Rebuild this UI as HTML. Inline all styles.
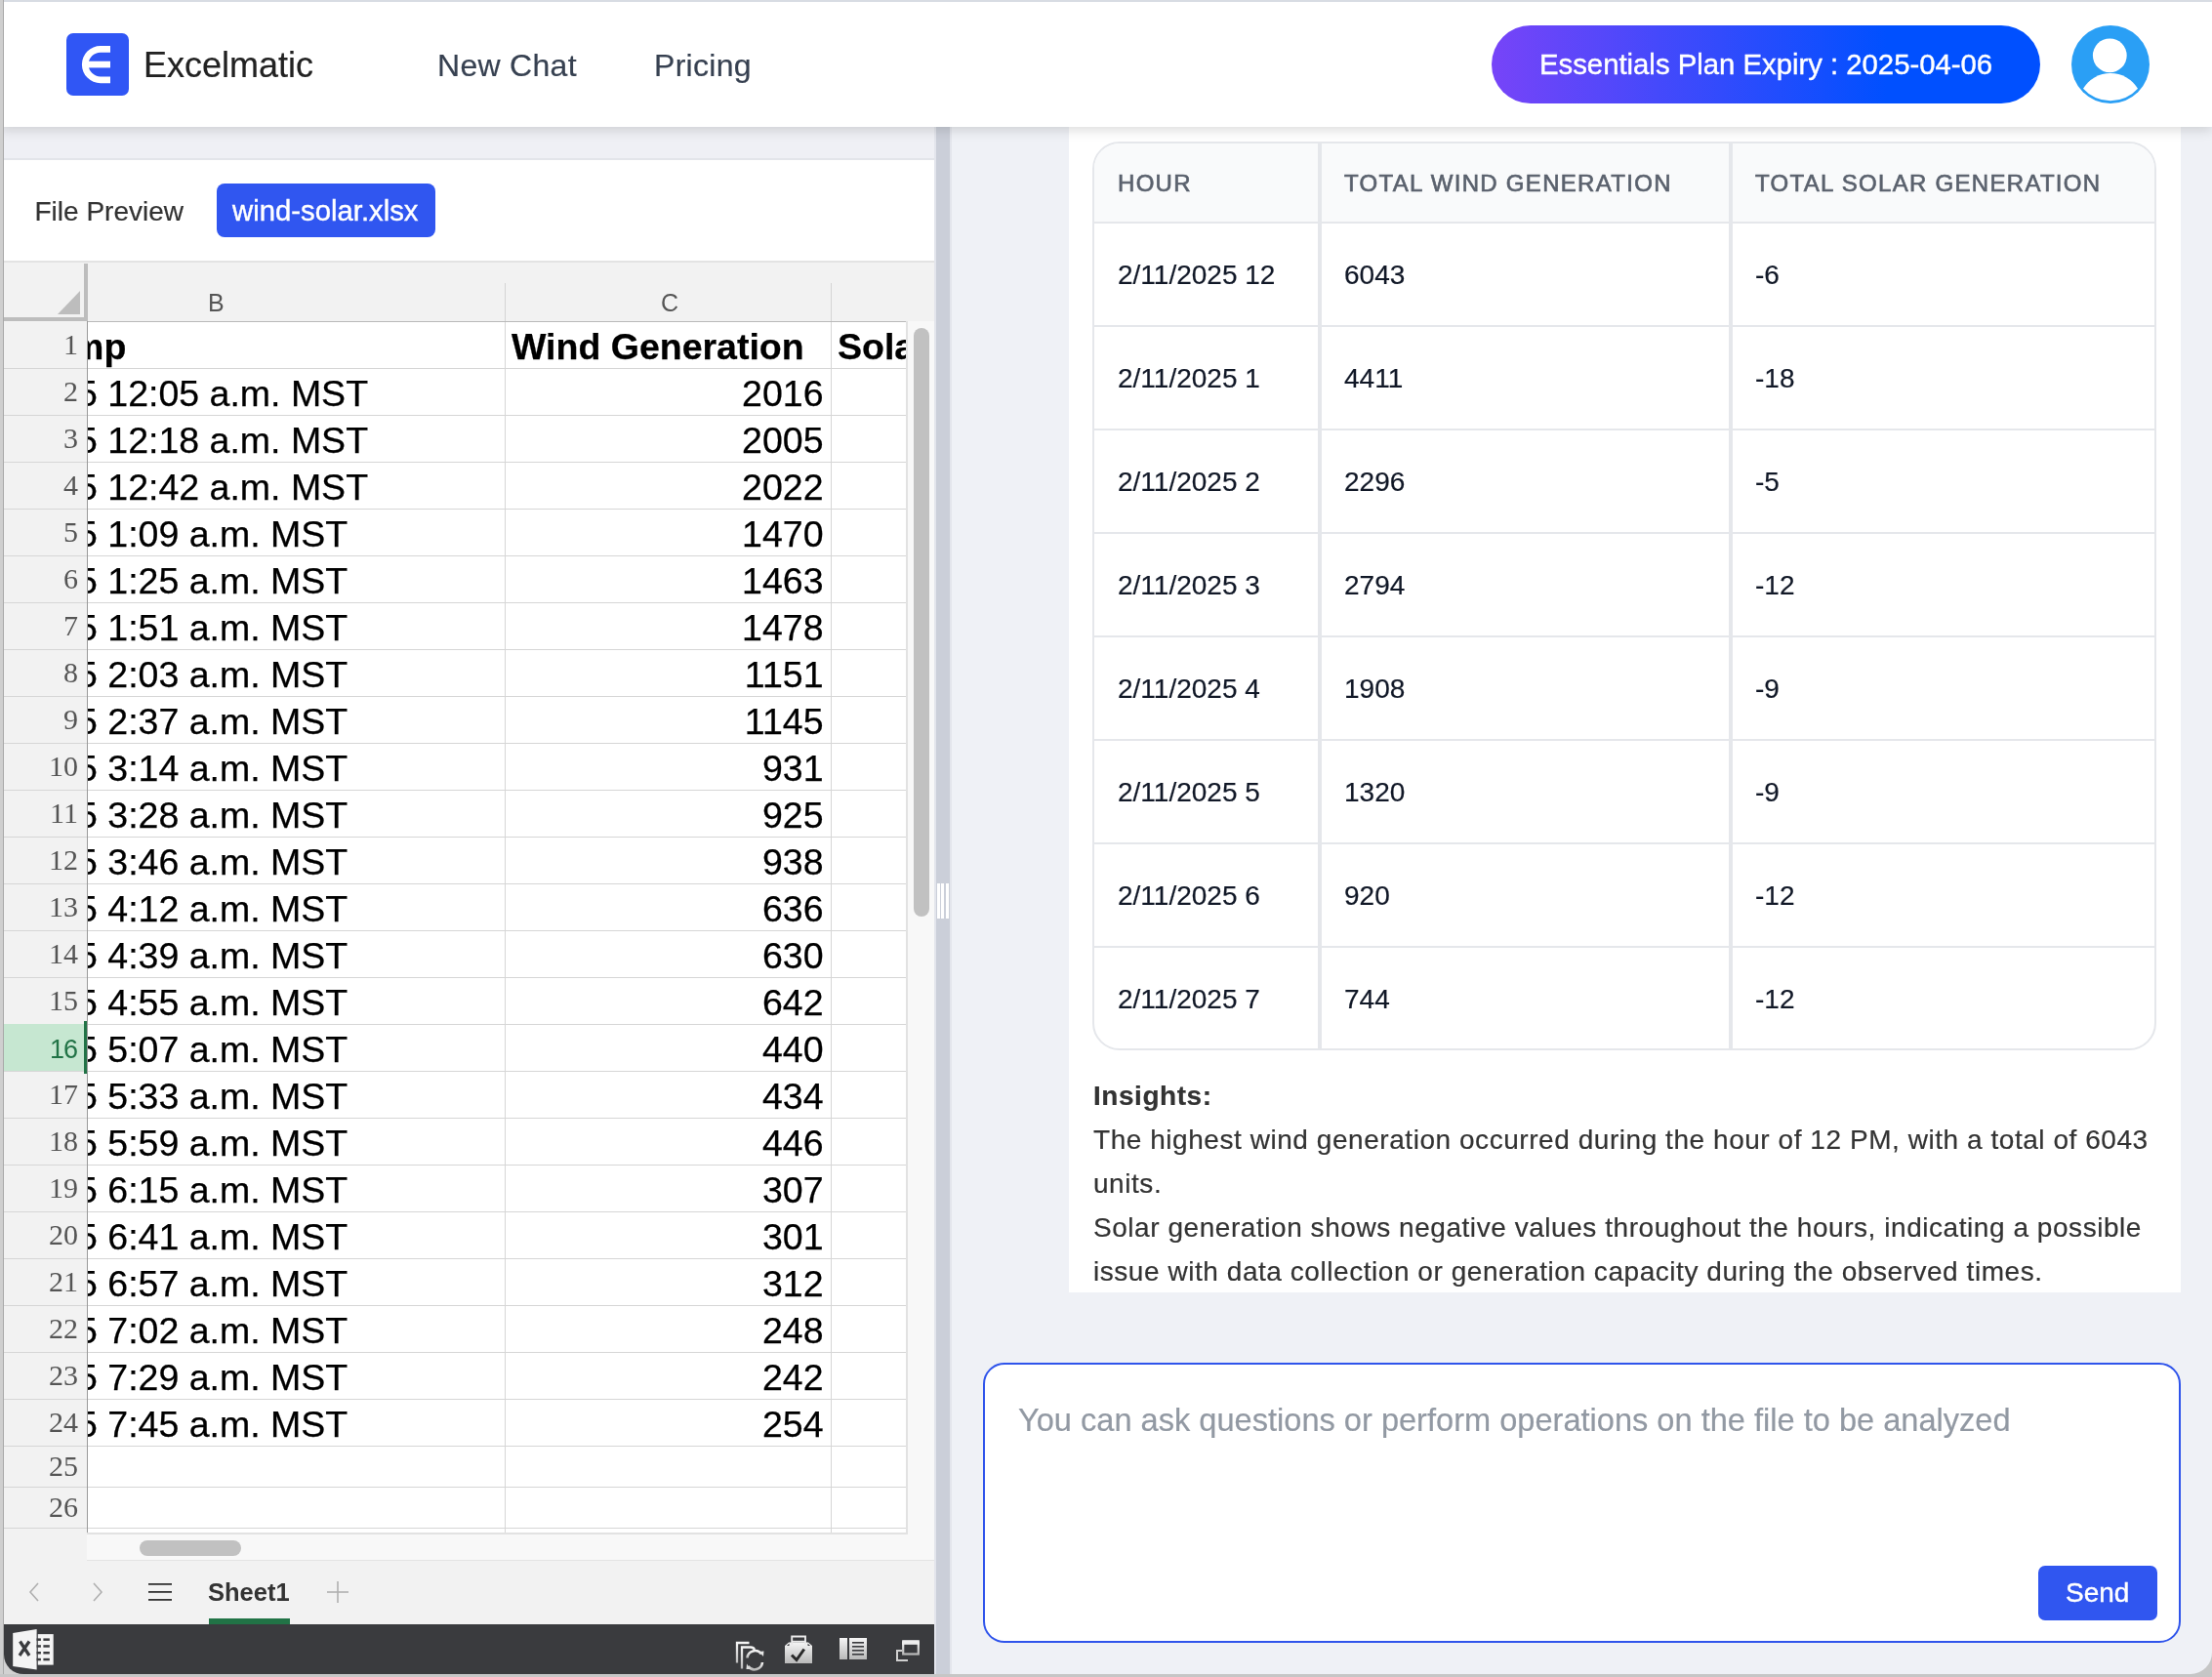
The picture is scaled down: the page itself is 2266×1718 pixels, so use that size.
<!DOCTYPE html>
<html><head><meta charset="utf-8">
<style>
*{box-sizing:border-box;margin:0;padding:0}
html,body{width:2266px;height:1718px;overflow:hidden;background:#eff1f6;font-family:"Liberation Sans",sans-serif;}
.a{position:absolute;white-space:pre}
#root{position:absolute;left:0;top:0;width:2266px;height:1718px;overflow:hidden;will-change:transform}
.bold{font-weight:700}
#hdr{position:absolute;left:0;top:0;width:2266px;height:130px;background:#fff;box-shadow:0 4px 11px rgba(0,0,0,0.13);z-index:5}
#logo{left:147px;top:45px;font-size:36px;line-height:44px;color:#222;-webkit-text-stroke:0.2px #222}
.nav{top:47px;font-size:32px;line-height:40px;letter-spacing:0.3px;color:#374151;-webkit-text-stroke:0.2px #374151}
#pill{position:absolute;left:1528px;top:26px;width:562px;height:80px;border-radius:40px;background:linear-gradient(90deg,#7744f8 0%,#0050ff 72%,#0050ff 100%)}
#pillt{left:49px;top:21.5px;font-size:29.3px;line-height:36px;color:#fff;-webkit-text-stroke:0.4px #fff}
#lp{position:absolute;left:0;top:130px;width:957px;height:1588px;background:#eff0f5}
#fp{position:absolute;left:4px;top:162px;width:953px;height:106px;background:#fff;border-top:2px solid #e3e5ea}
#fpt{left:31.5px;top:34.5px;font-size:28px;line-height:36px;color:#333;-webkit-text-stroke:0.2px #333}
#fbtn{position:absolute;left:218px;top:24px;width:224px;height:55px;border-radius:8px;background:#3056f0}
#fbt{left:16px;top:9.5px;font-size:29.3px;line-height:36px;color:#fff;-webkit-text-stroke:0.4px #fff}
#ss{position:absolute;left:4px;top:267px;width:953px;height:1397px;background:#f2f2f2;border-top:2px solid #e3e3e3}
#cornerv{position:absolute;left:86px;top:270px;width:4px;height:59px;background:#bdbdbd}
#cornerh{position:absolute;left:4px;top:325px;width:86px;height:4px;background:#bdbdbd}
#colline{position:absolute;left:90px;top:329px;z-index:2;width:838px;height:1px;background:#b9b9b9}
.ch{position:absolute;width:1px;background:#d4d4d4}
.colL{top:292px;font-size:25px;line-height:36px;color:#555}
#rowhdr{position:absolute;left:4px;top:329px;width:85px;height:1241px;background:#f2f2f2}
#cells{position:absolute;left:89px;top:329px;width:839px;height:1241px;background:#fff;overflow:hidden}
.rl{position:absolute;left:0;width:839px;height:1px;background:#d6d6d6}
.rl2{position:absolute;left:4px;width:85px;height:1px;background:#d6d6d6}
.cv{position:absolute;top:0;width:1px;height:1241px;background:#d6d6d6}
.hl{position:absolute;left:4px;width:85px;background:#c6e7d1}
.hlb{position:absolute;left:86px;width:4px;background:#217346}
.rn{left:0;width:80px;text-align:right;font-family:"Liberation Serif",serif;font-size:30px;line-height:48px;color:#555}
.rn16{left:0;width:79px;margin-top:2px;text-align:right;font-size:27px;letter-spacing:-1px;line-height:48px;color:#217346}
.cellb{font-size:37.5px;line-height:48px;color:#000;-webkit-text-stroke:0.25px #000}
.cellc{left:428px;width:326.5px;text-align:right;font-size:37.5px;line-height:48px;color:#000;-webkit-text-stroke:0.25px #000}
#rhline{position:absolute;left:89px;top:329px;width:1px;height:1241px;background:#9a9a9a}
#vtrack{position:absolute;left:928px;top:329px;width:29px;height:1243px;background:#f8f8f8;border-left:2px solid #e2e2e2;z-index:1}
#cellsbot{position:absolute;left:89px;top:1570px;width:841px;height:2px;background:#e2e2e2;z-index:1}
#vthumb{position:absolute;z-index:2;left:936px;top:336px;width:16px;height:603px;border-radius:8px;background:#c1c1c1}
#htrack{position:absolute;left:89px;top:1570px;width:868px;height:29px;background:#f8f8f8;border-bottom:1px solid #e4e4e4}
#hthumb{position:absolute;z-index:2;left:143px;top:1578px;width:104px;height:16px;border-radius:8px;background:#c1c1c1}
#tabbar{position:absolute;left:4px;top:1599px;width:953px;height:65px;background:#f2f2f2}
#dcorner{position:absolute;left:4px;top:1690px;width:30px;height:25px;background:#d2d2d2}
#sheet1{left:213px;top:1612.5px;font-size:25.5px;line-height:36px;font-weight:700;color:#333}
#tabul{position:absolute;left:214px;top:1658px;width:83px;height:6px;background:#217346}
#dark{position:absolute;left:4px;top:1664px;width:953px;height:51px;background:#3a3b3e;border-bottom-left-radius:20px}
#div{position:absolute;left:957px;top:130px;width:18px;height:1588px;background:#cbcfd9;border-left:2px solid #e3e5ec;border-right:2px solid #e3e5ec}
.grip{position:absolute;top:775px;width:3px;height:36px;background:#fff}
#msg{position:absolute;left:1095px;top:130px;width:1139px;height:1194px;background:#fff}
#tbl{position:absolute;left:24px;top:15px;width:1090px;height:931px;border:2px solid #e5e7eb;border-radius:28px;overflow:hidden}
#th{position:absolute;left:0;top:0;width:100%;height:82px;background:#f9fafb;border-bottom:2px solid #e5e7eb}
.th2{position:absolute;left:0;width:100%;height:2px;background:#e5e7eb}
.tv{position:absolute;top:0;width:4px;height:100%;background:#e5e7eb}
.thx{top:23px;font-size:24px;line-height:36px;letter-spacing:1.3px;color:#5a616d;-webkit-text-stroke:0.65px #5a616d}
.td{font-size:28px;line-height:104px;color:#111827;-webkit-text-stroke:0.2px #111827}
.ins{left:25px;font-size:28px;line-height:45px;letter-spacing:0.55px;color:#333;-webkit-text-stroke:0.2px #333}
#inp{position:absolute;left:1007px;top:1396px;width:1227px;height:287px;border:2px solid #2f54eb;border-radius:22px;background:#fff}
#ph{left:34px;top:35px;font-size:32.6px;line-height:44px;color:#9299a3;-webkit-text-stroke:0.2px #9299a3}
#send{position:absolute;left:1079px;top:206px;width:122px;height:56px;border-radius:7px;background:#3056f0}
#sendt{left:28px;top:10px;font-size:28px;line-height:36px;color:#fff;-webkit-text-stroke:0.4px #fff}
#wtop{position:absolute;left:4px;top:0;width:2262px;height:2px;background:#d8dce3;z-index:9}
#wleft{position:absolute;left:0;top:0;width:4px;height:1718px;background:#cfcfcf;border-right:1px solid #a9a9a9;z-index:9}
#wbot{position:absolute;left:0;top:1715px;width:2266px;height:3px;background:#c6c6c6;z-index:9}
#wbr{position:absolute;left:2236px;top:1688px;width:30px;height:30px;background:#c6c6c6;z-index:8}
#wbr div{width:30px;height:27px;background:#eff1f6;border-bottom-right-radius:22px}

</style></head>
<body><div id="root">
<div id="lp"></div>
<div id="fp"><span class="a" id="fpt">File Preview</span><div id="fbtn"><span class="a" id="fbt">wind-solar.xlsx</span></div></div>
<div id="ss"></div>
<div id="cornerv"></div><div id="cornerh"></div><svg class="a" style="left:0;top:0" width="100" height="340"><polygon points="59,322 82,322 82,298" fill="#bdbdbd"/></svg><div class="ch" style="left:517px;top:290px;height:39px"></div><div class="ch" style="left:851px;top:290px;height:39px"></div><div id="colline"></div><span class="a colL" style="left:213px">B</span><span class="a colL" style="left:677px">C</span><div id="rowhdr"></div><div id="cells"><div class="rl" style="top:48px"></div><span class="a cellb bold" style="top:1.5px;left:-157px">Timestamp</span><span class="a cellb bold" style="top:1.5px;left:435px">Wind Generation</span><span class="a cellb bold" style="top:1.5px;left:769px">Solar Generation</span><div class="rl" style="top:96px"></div><span class="a cellb" style="top:49.5px;left:-10px">5 12:05 a.m. MST</span><span class="a cellc" style="top:49.5px">2016</span><div class="rl" style="top:144px"></div><span class="a cellb" style="top:97.5px;left:-10px">5 12:18 a.m. MST</span><span class="a cellc" style="top:97.5px">2005</span><div class="rl" style="top:192px"></div><span class="a cellb" style="top:145.5px;left:-10px">5 12:42 a.m. MST</span><span class="a cellc" style="top:145.5px">2022</span><div class="rl" style="top:240px"></div><span class="a cellb" style="top:193.5px;left:-10px">5 1:09 a.m. MST</span><span class="a cellc" style="top:193.5px">1470</span><div class="rl" style="top:288px"></div><span class="a cellb" style="top:241.5px;left:-10px">5 1:25 a.m. MST</span><span class="a cellc" style="top:241.5px">1463</span><div class="rl" style="top:336px"></div><span class="a cellb" style="top:289.5px;left:-10px">5 1:51 a.m. MST</span><span class="a cellc" style="top:289.5px">1478</span><div class="rl" style="top:384px"></div><span class="a cellb" style="top:337.5px;left:-10px">5 2:03 a.m. MST</span><span class="a cellc" style="top:337.5px">1151</span><div class="rl" style="top:432px"></div><span class="a cellb" style="top:385.5px;left:-10px">5 2:37 a.m. MST</span><span class="a cellc" style="top:385.5px">1145</span><div class="rl" style="top:480px"></div><span class="a cellb" style="top:433.5px;left:-10px">5 3:14 a.m. MST</span><span class="a cellc" style="top:433.5px">931</span><div class="rl" style="top:528px"></div><span class="a cellb" style="top:481.5px;left:-10px">5 3:28 a.m. MST</span><span class="a cellc" style="top:481.5px">925</span><div class="rl" style="top:576px"></div><span class="a cellb" style="top:529.5px;left:-10px">5 3:46 a.m. MST</span><span class="a cellc" style="top:529.5px">938</span><div class="rl" style="top:624px"></div><span class="a cellb" style="top:577.5px;left:-10px">5 4:12 a.m. MST</span><span class="a cellc" style="top:577.5px">636</span><div class="rl" style="top:672px"></div><span class="a cellb" style="top:625.5px;left:-10px">5 4:39 a.m. MST</span><span class="a cellc" style="top:625.5px">630</span><div class="rl" style="top:720px"></div><span class="a cellb" style="top:673.5px;left:-10px">5 4:55 a.m. MST</span><span class="a cellc" style="top:673.5px">642</span><div class="rl" style="top:768px"></div><span class="a cellb" style="top:721.5px;left:-10px">5 5:07 a.m. MST</span><span class="a cellc" style="top:721.5px">440</span><div class="rl" style="top:816px"></div><span class="a cellb" style="top:769.5px;left:-10px">5 5:33 a.m. MST</span><span class="a cellc" style="top:769.5px">434</span><div class="rl" style="top:864px"></div><span class="a cellb" style="top:817.5px;left:-10px">5 5:59 a.m. MST</span><span class="a cellc" style="top:817.5px">446</span><div class="rl" style="top:912px"></div><span class="a cellb" style="top:865.5px;left:-10px">5 6:15 a.m. MST</span><span class="a cellc" style="top:865.5px">307</span><div class="rl" style="top:960px"></div><span class="a cellb" style="top:913.5px;left:-10px">5 6:41 a.m. MST</span><span class="a cellc" style="top:913.5px">301</span><div class="rl" style="top:1008px"></div><span class="a cellb" style="top:961.5px;left:-10px">5 6:57 a.m. MST</span><span class="a cellc" style="top:961.5px">312</span><div class="rl" style="top:1056px"></div><span class="a cellb" style="top:1009.5px;left:-10px">5 7:02 a.m. MST</span><span class="a cellc" style="top:1009.5px">248</span><div class="rl" style="top:1104px"></div><span class="a cellb" style="top:1057.5px;left:-10px">5 7:29 a.m. MST</span><span class="a cellc" style="top:1057.5px">242</span><div class="rl" style="top:1152px"></div><span class="a cellb" style="top:1105.5px;left:-10px">5 7:45 a.m. MST</span><span class="a cellc" style="top:1105.5px">254</span><div class="rl" style="top:1194px"></div><div class="rl" style="top:1236px"></div><div class="cv" style="left:428px"></div><div class="cv" style="left:762px"></div></div><div class="rl2" style="top:377px"></div><span class="a rn" style="top:329px">1</span><div class="rl2" style="top:425px"></div><span class="a rn" style="top:377px">2</span><div class="rl2" style="top:473px"></div><span class="a rn" style="top:425px">3</span><div class="rl2" style="top:521px"></div><span class="a rn" style="top:473px">4</span><div class="rl2" style="top:569px"></div><span class="a rn" style="top:521px">5</span><div class="rl2" style="top:617px"></div><span class="a rn" style="top:569px">6</span><div class="rl2" style="top:665px"></div><span class="a rn" style="top:617px">7</span><div class="rl2" style="top:713px"></div><span class="a rn" style="top:665px">8</span><div class="rl2" style="top:761px"></div><span class="a rn" style="top:713px">9</span><div class="rl2" style="top:809px"></div><span class="a rn" style="top:761px">10</span><div class="rl2" style="top:857px"></div><span class="a rn" style="top:809px">11</span><div class="rl2" style="top:905px"></div><span class="a rn" style="top:857px">12</span><div class="rl2" style="top:953px"></div><span class="a rn" style="top:905px">13</span><div class="rl2" style="top:1001px"></div><span class="a rn" style="top:953px">14</span><div class="rl2" style="top:1049px"></div><span class="a rn" style="top:1001px">15</span><div class="rl2" style="top:1097px"></div><div class="hl" style="top:1049px;height:48px"></div><div class="hlb" style="top:1046px;height:54px"></div><span class="a rn16" style="top:1049px">16</span><div class="rl2" style="top:1145px"></div><span class="a rn" style="top:1097px">17</span><div class="rl2" style="top:1193px"></div><span class="a rn" style="top:1145px">18</span><div class="rl2" style="top:1241px"></div><span class="a rn" style="top:1193px">19</span><div class="rl2" style="top:1289px"></div><span class="a rn" style="top:1241px">20</span><div class="rl2" style="top:1337px"></div><span class="a rn" style="top:1289px">21</span><div class="rl2" style="top:1385px"></div><span class="a rn" style="top:1337px">22</span><div class="rl2" style="top:1433px"></div><span class="a rn" style="top:1385px">23</span><div class="rl2" style="top:1481px"></div><span class="a rn" style="top:1433px">24</span><div class="rl2" style="top:1523px"></div><span class="a rn" style="top:1478px">25</span><div class="rl2" style="top:1565px"></div><span class="a rn" style="top:1520px">26</span><div id="rhline"></div><div id="vtrack"></div><div id="vthumb"></div><div id="htrack"></div><div id="cellsbot"></div><div id="hthumb"></div><div id="tabbar"></div><svg class="a" style="left:0;top:1600px" width="400" height="64" viewBox="0 1600 400 64"><polyline points="39,1622 31,1631 39,1640" fill="none" stroke="#b0b0b0" stroke-width="1.6"/><polyline points="96,1622 104,1631 96,1640" fill="none" stroke="#b0b0b0" stroke-width="1.6"/><rect x="152" y="1622" width="24" height="1.8" fill="#333"/><rect x="152" y="1630" width="24" height="1.8" fill="#333"/><rect x="152" y="1638" width="24" height="1.8" fill="#333"/><rect x="335" y="1630.2" width="22" height="1.6" fill="#b0b0b0"/><rect x="345.2" y="1620" width="1.6" height="22" fill="#b0b0b0"/></svg><span class="a" id="sheet1">Sheet1</span><div id="tabul"></div><div id="dcorner"></div><div id="dark"></div><svg class="a" style="left:0;top:1664px" width="957" height="51" viewBox="0 1664 957 51"><defs><linearGradient id="ig" x1="0" y1="0" x2="0" y2="1"><stop offset="0" stop-color="#f5f5f5"/><stop offset="1" stop-color="#b9b9b9"/></linearGradient></defs><path d="M13.2,1673 L37.6,1669.1 L37.6,1710.6 L13.2,1707 Z" fill="#f4f4f4"/><rect x="38.8" y="1674.1" width="15.9" height="31.5" fill="#f4f4f4"/><g fill="#3a3b3e"><rect x="37.6" y="1678.4" width="4.3" height="2.5"/><rect x="44.4" y="1678.4" width="6.4" height="2.5"/><rect x="37.6" y="1685.2" width="4.3" height="2.5"/><rect x="44.4" y="1685.2" width="6.4" height="2.5"/><rect x="37.6" y="1692" width="4.3" height="2.5"/><rect x="44.4" y="1692" width="6.4" height="2.5"/><rect x="37.6" y="1698.8" width="4.3" height="2.5"/><rect x="44.4" y="1698.8" width="6.4" height="2.5"/></g><path d="M20.5,1681.5 L30,1696" stroke="#3a3b3e" stroke-width="3.2"/><path d="M30,1681.5 L20,1696" stroke="#3a3b3e" stroke-width="3.2"/><g fill="none" stroke="url(#ig)" stroke-width="2.3"><path d="M755,1703.5 V1683 H767.5"/><path d="M760,1709.5 V1687.5 H769 Q772,1687.5 773,1690"/></g><g fill="none" stroke="url(#ig)" stroke-width="2.6"><path d="M765.5,1698.5 A8,8 0 0 1 780,1694.5"/><path d="M781,1703 A8,8 0 0 1 766.5,1707"/></g><path d="M777.5,1692 L782.5,1691.5 L782,1697 Z" fill="#e6e6e6"/><path d="M769,1710 L764.5,1710 L765,1704.5 Z" fill="#dddddd"/><path d="M804,1686 L808,1682.5 H828 L832,1686 V1704 H804 Z" fill="url(#ig)"/><path d="M806,1686 L808.5,1683.5 L808.5,1686 Z" fill="#3a3b3e"/><path d="M830,1686 L827.5,1683.5 L827.5,1686 Z" fill="#3a3b3e"/><path d="M811.2,1685 V1676.5 H825 V1685" fill="none" stroke="#e9e9e9" stroke-width="1.9"/><rect x="811" y="1680.8" width="14" height="1.9" fill="#e9e9e9"/><path d="M811,1695.5 L816,1700.5 L823.8,1689.5" fill="none" stroke="#2a2a2a" stroke-width="3"/><rect x="860" y="1678" width="8" height="22" fill="url(#ig)"/><rect x="870" y="1678" width="18" height="22" fill="url(#ig)"/><g fill="#3a3b3e"><rect x="873" y="1682" width="12" height="1.6"/><rect x="873" y="1686" width="12" height="1.6"/><rect x="873" y="1690" width="12" height="1.6"/><rect x="873" y="1694" width="12" height="1.6"/></g><rect x="925.2" y="1682.5" width="15.6" height="12" fill="none" stroke="url(#ig)" stroke-width="2.2"/><rect x="924.2" y="1680.2" width="17.6" height="4.6" fill="#eeeeee"/><path d="M919,1690 V1701 H930 M919,1691 H924" fill="none" stroke="#d0d0d0" stroke-width="2"/></svg><div id="div"><div class="grip" style="left:1px"></div><div class="grip" style="left:5px"></div><div class="grip" style="left:10px"></div></div>
<div id="msg">
<div id="tbl"><div id="th"></div><div class="tv" style="left:229px"></div><div class="tv" style="left:650px"></div><span class="a thx" style="left:24px">HOUR</span><span class="a thx" style="left:256px">TOTAL WIND GENERATION</span><span class="a thx" style="left:677px">TOTAL SOLAR GENERATION</span><div class="th2" style="top:186px"></div><span class="a td" style="top:83px;left:24px">2/11/2025 12</span><span class="a td" style="top:83px;left:256px">6043</span><span class="a td" style="top:83px;left:677px">-6</span><div class="th2" style="top:292px"></div><span class="a td" style="top:189px;left:24px">2/11/2025 1</span><span class="a td" style="top:189px;left:256px">4411</span><span class="a td" style="top:189px;left:677px">-18</span><div class="th2" style="top:398px"></div><span class="a td" style="top:295px;left:24px">2/11/2025 2</span><span class="a td" style="top:295px;left:256px">2296</span><span class="a td" style="top:295px;left:677px">-5</span><div class="th2" style="top:504px"></div><span class="a td" style="top:401px;left:24px">2/11/2025 3</span><span class="a td" style="top:401px;left:256px">2794</span><span class="a td" style="top:401px;left:677px">-12</span><div class="th2" style="top:610px"></div><span class="a td" style="top:507px;left:24px">2/11/2025 4</span><span class="a td" style="top:507px;left:256px">1908</span><span class="a td" style="top:507px;left:677px">-9</span><div class="th2" style="top:716px"></div><span class="a td" style="top:613px;left:24px">2/11/2025 5</span><span class="a td" style="top:613px;left:256px">1320</span><span class="a td" style="top:613px;left:677px">-9</span><div class="th2" style="top:822px"></div><span class="a td" style="top:719px;left:24px">2/11/2025 6</span><span class="a td" style="top:719px;left:256px">920</span><span class="a td" style="top:719px;left:677px">-12</span><span class="a td" style="top:825px;left:24px">2/11/2025 7</span><span class="a td" style="top:825px;left:256px">744</span><span class="a td" style="top:825px;left:677px">-12</span></div>
<span class="a ins bold" style="top:970px">Insights:</span><span class="a ins" style="top:1015px">The highest wind generation occurred during the hour of 12 PM, with a total of 6043</span><span class="a ins" style="top:1060px">units.</span><span class="a ins" style="top:1105px">Solar generation shows negative values throughout the hours, indicating a possible</span><span class="a ins" style="top:1150px">issue with data collection or generation capacity during the observed times.</span></div>
<div id="inp"><span class="a" id="ph">You can ask questions or perform operations on the file to be analyzed</span><div id="send"><span class="a" id="sendt">Send</span></div></div>
<div id="hdr"><svg class="a" style="left:68px;top:34px" width="64" height="64" viewBox="68 34 64 64"><rect x="68" y="34" width="64" height="64" rx="7" fill="#3056f5"/><path d="M113,47 H103 A19.1,19.1 0 0 0 103,85.2 H113 V78.5 H103 A12.4,12.4 0 0 1 103,53.7 H113 Z" fill="#fff"/><rect x="90" y="62.7" width="23" height="6.7" fill="#fff"/></svg><span class="a" id="logo">Excelmatic</span><span class="a nav" style="left:448px">New Chat</span><span class="a nav" style="left:670px">Pricing</span><div id="pill"><span class="a" id="pillt">Essentials Plan Expiry : 2025-04-06</span></div><svg class="a" style="left:2122px;top:26px" width="80" height="80" viewBox="2122 26 80 80"><circle cx="2162" cy="66" r="40" fill="#2a9ff5"/><circle cx="2161.3" cy="56.8" r="17.4" fill="#fff"/><path d="M2134,90.7 A32.8,32.8 0 0 1 2190,90.7 A37.3,37.3 0 0 1 2134,90.7 Z" fill="#fff"/></svg></div>
<div id="wtop"></div><div id="wleft"></div><div id="wbot"></div><div id="wbr"><div></div></div>
</div></body></html>
